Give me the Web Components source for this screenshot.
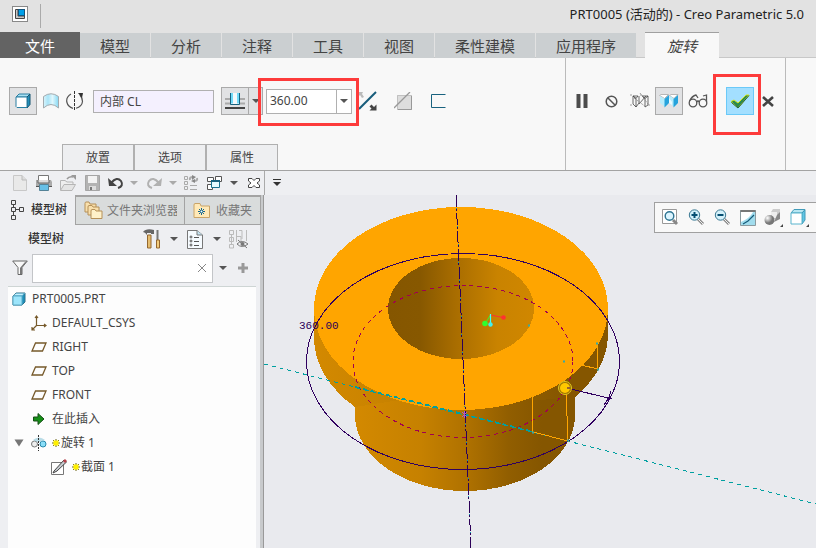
<!DOCTYPE html>
<html lang="zh-CN">
<head>
<meta charset="utf-8">
<title>PRT0005 - Creo Parametric 5.0</title>
<style>
html, body { margin: 0; height: 100%; }
body { font: 12px/16px "Noto Sans", "Noto Sans CJK SC", sans-serif; color: #444; background: #e9eaee; overflow: hidden; }
</style>
</head>
<body>
<app-window></app-window>
<script>
const ICONS = {
  app: [16, 16, '<rect x=".5" y=".5" width="15" height="15" fill="#fff" stroke="#888"/><path d="M3.500 3.500V12.500H12.500V10H6V3.500Z" fill="#c8c8c8" stroke="#444"/><rect x="6.500" y="3.500" width="6" height="6" fill="#009fe8" stroke="#14547c"/>'],
  solid: [16, 16, '<path d="M1 4L4 1H15L12 4Z" fill="#a9e0f2" stroke="#2b7fa3"/><path d="M12 4L15 1V11.500L12 15Z" fill="#238fba" stroke="#15536e"/><path d="M1 4H12V14.500H2L1 13.500Z" fill="#fff" stroke="#2b7fa3"/>'],
  surface: [16, 16, '<defs><linearGradient id="s"><stop stop-color="#d8f4fc"/><stop offset=".3" stop-color="#a9e4f7"/><stop offset=".6" stop-color="#dff7fd"/><stop offset="1" stop-color="#86d8f3"/></linearGradient></defs><path d="M.5 3.500Q8-2 15.500 3.500V15Q8 8 .5 15Z" fill="url(#s)" stroke="#a3aaae"/>'],
  revolve: [18, 20, '<path d="M8.500 0v20" stroke="#333" stroke-dasharray="3 1"/><path d="M5 3Q0 6 .8 11Q2 16 7 17.300M10 17.300Q16 15.500 16.500 10.500Q16.500 7 14 4" fill="none" stroke="#555" stroke-width="1.200"/><path d="M12 2h5l-1 5z" fill="#333"/>'],
  sides: [22, 18, '<path d="M1 7H21M1 11.500H21" stroke="#aaa" stroke-width="2"/><path d="M7 1H15V12H7Z" fill="#f5f9fb"/><path d="M6.500 1V12.500H15.500V1" fill="none" stroke="#19627f"/><path d="M8 1V11.500M14 1V11.500" fill="none" stroke="#71daf8" stroke-width="2"/><path d="M1 16H21" stroke="#444" stroke-width="2"/>'],
  flip: [18, 20, '<path d="M0 18L17 1" stroke="#185d7b" stroke-width="2"/><path d="M0 1H4L3 3L5 6L3 7L1 4L0 5Z" fill="#bbb"/><path d="M17.500 19.500H10.500L12.500 17.500L10.500 15.500L12.500 13.500L15 16L17.500 13.500Z" fill="#444"/>'],
  thick: [18, 18, '<path d="M3.500 3.500H17.500V17.500H3.500Z" fill="#ddd" stroke="#999" stroke-dasharray="1 1"/><path d="M4 17.500H17.500V4" fill="none" stroke="#999"/><path d="M0 16L16 0" stroke="#999" stroke-width="1.300"/>'],
  sketch: [16, 16, '<path d="M15.500 1.500H1.500V14.500H15.500" fill="none" stroke="#19627f"/>'],
  pause: [12, 14, '<path d="M2.500 0V14M9.500 0V14" stroke="#4c4c4c" stroke-width="4"/>'],
  no: [13, 13, '<circle cx="6.500" cy="6.500" r="5.300" fill="none" stroke="#555" stroke-width="1.500"/><path d="M3 3L10 10" stroke="#555" stroke-width="1.500"/>'],
  wire: [20, 16, '<g fill="none" stroke="#444"><path d="M3 3H8L6 5.500ZM12 3H18L15 5.500ZM3 3L6 5.500V14L3 11ZM6 14L9 10V3M12 3L15 5.500V14M18 3V12L15 14M9 11L16 3" stroke-width=".8"/><path d="M0 2H3M0 12H3M10 2H12M18 12H20M4 5L16 14M10 0L18 11" stroke="#888" stroke-width=".8" stroke-dasharray="2 1"/></g>'],
  preview: [20, 14, '<path d="M.5 1.500L2 .5H9.500L5.500 4.500ZM10.500 1.500L12 .5H19L15 4.500Z" fill="#fff" stroke="#b7b7b7"/><path d="M1 2L6 5V13L1 9ZM10 4L12 2L15 5V13L10 9Z" fill="#b8ecfb"/><path d="M5.500 5L10 1V9L5.500 13.500ZM14.500 5L19 1V9L14.500 13.500Z" fill="#26a3dc"/><path d="M10 4L13 8V11L10 9Z" fill="#edfaff"/>'],
  glasses: [20, 14, '<g fill="none" stroke="#555" stroke-width="1.300"><circle cx="5" cy="9" r="3.800"/><circle cx="15" cy="9" r="3.800"/><path d="M8.500 8Q10 6 11.500 8M1.500 7Q4 2 8 1L10 4M18.500 8V1L15 2"/></g>'],
  check: [20, 15, '<path d="M1 7.500L4 6L8 9L16 1H19L8 14Z" fill="#2b8a4d" stroke="#d6e618"/><path d="M1.500 8.500L8 14L19 1.500" fill="none" stroke="#245f3e"/>'],
  cross: [12, 12, '<path d="M1 2L11 11M11 2L1 11" stroke="#444" stroke-width="2.600"/>'],
  newf: [14, 16, '<path d="M.5.500H9L13.500 5V15.500H.5Z" fill="#e9e9e9" stroke="#c8c8c8"/><path d="M9 .5V5H13.500" fill="#ddd" stroke="#bbb"/>'],
  print: [18, 16, '<path d="M3.500 6V.500H13.500V6" fill="#fff" stroke="#777"/><path d="M1 5H16L17 7V12H1Z" fill="#aaa"/><path d="M3 5V8H14V5" fill="#ddd" stroke="#666"/><path d="M1 11.500H17" stroke="#555"/><path d="M4.500 9.500H13.500V15.500H4.500Z" fill="#66bfe6" stroke="#548297"/>'],
  open: [16, 16, '<path d="M.5 15V5.500H5L7 7H13V10" fill="#eee" stroke="#b5b5b5"/><path d="M.5 15.500L4 9.500H15.500L12 15.500Z" fill="#e4e4e4" stroke="#b5b5b5"/><path d="M7 4Q9 1 13 2" stroke="#999" stroke-width="1.500" fill="none"/><path d="M11 0H16V5Z" fill="#999"/>'],
  save: [15, 16, '<path d="M.5.500H14.500V15.500H.5Z" fill="#b3b3b3" stroke="#a5a5a5"/><path d="M3 1H12V8H3Z" fill="#f3f3f3"/><path d="M4 11H11V15H4Z" fill="#ddd"/><path d="M5 12H7V15H5Z" fill="#777"/>'],
  undo: [16, 12, '<path d="M3 6Q9-1 13 4Q16 9 10 11" fill="none" stroke="#444" stroke-width="2"/><path d="M0 1L1 9H9Z" fill="#444"/>'],
  redo: [16, 12, '<path d="M13 6Q7-1 3 4Q0 9 6 11" fill="none" stroke="#b1b1b1" stroke-width="2"/><path d="M16 1L15 9H7Z" fill="#b1b1b1"/>'],
  regen: [16, 16, '<g fill="none" stroke="#aaa"><path d="M1.500 1.500H4.500V4.500H1.500ZM1.500 6.500H4.500V9.500H1.500ZM1.500 11.500H4.500V14.500H1.500ZM7 10.500H14M7 14.500H14" /><path d="M7 5Q6 2 10 2M14 3Q15 6 11 6" stroke-width="2"/></g><path d="M9 0L13 2L9 5ZM12 4L8 6L12 8Z" fill="#888"/>'],
  windows: [16, 15, '<path d="M.5 1.500H6.500V5.500H.5ZM8.500.500H14.500V5.500H8.500ZM.5 8.500H5.500V13.500H.5Z" fill="#fff" stroke="#555"/><path d="M4.500 4.500H12.500V11.500H4.500Z" fill="#e6faff" stroke="#19708f"/><path d="M4 5H13" stroke="#19627f" stroke-width="2"/>'],
  closewin: [12, 10, '<path d="M.5.500H4L6 2.500L8 .5H11.500V3L9 5L11.500 7V9.500H8L6 7.500L4 9.500H.5V7L3 5L.5 3Z" fill="#fff" stroke="#444"/>'],
  caret: [8, 4, '<path d="M0 0H8L4 4Z" fill="#555"/>'],
  caretoff: [8, 4, '<path d="M0 0H8L4 4Z" fill="#aaa"/>'],
  more: [10, 8, '<path d="M1 .5H9" stroke="#333"/><path d="M1 3H9L5 7Z" fill="#333"/>'],
  tree: [14, 20, '<path d="M1.500.500H5.500V4.500H1.500ZM1.500 7.500H5.500V11.500H1.500ZM1.500 15.500H5.500V19.500H1.500ZM9.500 7.500H13.500V11.500H9.500ZM3.500 5V7M3.500 12V15M6 9.500H9" fill="none" stroke="#444"/>'],
  folders: [19, 19, '<g fill="#f8dfab" stroke="#b59059"><path d="M1 11V2.500Q1 1 2 1H5L6 3H12V11Z"/><path d="M4 14V6Q4 4.500 5 4.500H8L9 6H15V14Z"/><path d="M7 17.500V10Q7 8.500 8 8.500H11L12 10H18V17.500Z" fill="#fff1c9"/></g>'],
  fav: [17, 15, '<path d="M1 14.500V2Q1 .5 2 .5H7L8 3H16.500V14.500Z" fill="#ffe9b7" stroke="#c9a468"/><path d="M8.500 5V12M5 8.500H12M6 6L11 11M11 6L6 11" stroke="#14678b"/><circle cx="8.500" cy="8.500" r="1" fill="#fff"/>'],
  tools: [18, 20, '<path d="M0 3Q3-1 11 1V5H8V4H4V6Q2 3 0 3Z" fill="#666"/><path d="M4.500 6H8V19H4.500Z" fill="#e5bd70" stroke="#94672e"/><path d="M14.500 1V12" stroke="#777" stroke-width="2"/><path d="M13.500 11H16.500V19H13.500Z" fill="#f3cc7d" stroke="#94672e"/>'],
  list: [16, 19, '<path d="M.5.500H10L15.500 5V18.500H.5Z" fill="#f6fbff" stroke="#777"/><path d="M10 .5V5H15.500" fill="#c6e6f4" stroke="#777"/><g fill="none" stroke="#555"><circle cx="4" cy="7" r="1"/><circle cx="4" cy="11" r="1"/><circle cx="4" cy="15" r="1"/><path d="M7 7.500H12M7 11.500H12M7 15.500H12"/></g>'],
  hide: [20, 20, '<path d="M1.500 1.500H5.500V5.500H1.500ZM1.500 8.500H5.500V12.500H1.500ZM1.500 15.500H5.500V19H1.500ZM3.500 6V15M8.500 1V13M11 1.500H14V10M18.500 1V12M8 7.500H13V12" fill="none" stroke="#bbb"/><path d="M9 15Q14 10 20 15Q14 20 9 15ZM10 11L19 19" fill="none" stroke="#777"/><circle cx="14.500" cy="15" r="2" fill="#777"/>'],
  funnel: [16, 16, '<path d="M.7 1H15.300L10 7.500V14.500H6V7.500Z" fill="#f8f8f8" stroke="#666"/><path d="M13 2L8 8V14H10V7.500L15 1Z" fill="#777"/>'],
  clear: [8, 8, '<path d="M0 0L8 8M8 0L0 8" stroke="#888"/>'],
  plus: [12, 12, '<path d="M6 1V11M1 6H11" stroke="#999" stroke-width="3"/>'],
  part: [14, 14, '<path d="M1 4L4 1H13V10L10 13H1Z" fill="#1c91bc" stroke="#31718a"/><path d="M1 4H10V13H1Z" fill="#9de5fb"/><path d="M1.500 3.500L4 1.500H12L10 3.500Z" fill="#c4f1ff"/><path d="M1 4H10V13H1ZM10 4L13 1" fill="none" stroke="#5aa9c5"/>'],
  csys: [16, 16, '<path d="M5.500 1V10.500H15M5.500 10.500L1 15M4 3L5.500 1L7 3M13 9L15 10.500L13 12M1 12V15H4" fill="none" stroke="#76592a" stroke-width="1.200"/>'],
  plane: [16, 10, '<path d="M4.500 1H15L11.500 9H1Z" fill="none" stroke="#76592a" stroke-width="1.300"/>'],
  insert: [12, 12, '<path d="M.5 4H5V.5L11 6L5 11.500V8H.5Z" fill="#169018" stroke="#164f16"/>'],
  feature: [16, 16, '<circle cx="3.500" cy="9" r="3" fill="#eee" stroke="#777"/><circle cx="12" cy="9" r="3" fill="#8adef8" stroke="#2789ac"/><path d="M2 5Q8 0 14 5Q8 9 2 5Z" fill="#9bcddd" opacity=".7"/><path d="M7.500 0V16" stroke="#333" stroke-dasharray="2 1"/>'],
  section: [16, 16, '<path d="M.5 3.500H12.500V15.500H.5Z" fill="#fff" stroke="#777"/><path d="M3 12L13 1L15.500 3L6 12L2 14Z" fill="#c6cbd0" stroke="#444"/><path d="M12 2L14 0L16 2L14 4Z" fill="#b7414b"/>'],
  spark: [8, 8, '<path d="M4 0V8M0 4H8M1 1L7 7M7 1L1 7" stroke="#6a6215"/><path d="M1.500 1.500H6.500V6.500H1.500Z" fill="#fff000"/>'],
  fold: [10, 8, '<path d="M.5.500H9.500L5 7.500Z" fill="#777"/>'],
  fit: [17, 17, '<path d="M.5.500H14.500V14.500H.5Z" fill="#fff" stroke="#999"/><path d="M11 11L15 15" stroke="#888" stroke-width="3"/><circle cx="7.500" cy="7" r="4.300" fill="#dcf5ff" stroke="#2e7492" stroke-width="1.400"/>'],
  zin: [17, 17, '<path d="M10 10L15 15" stroke="#888" stroke-width="3"/><path d="M10 10L15 15" stroke="#eee"/><circle cx="6.500" cy="6" r="5.200" fill="#d4f1fa" stroke="#3c7993"/><path d="M3.500 6H9.500M6.500 3V9" stroke="#064f72" stroke-width="2"/>'],
  zout: [17, 17, '<path d="M10 10L15 15" stroke="#888" stroke-width="3"/><path d="M10 10L15 15" stroke="#eee"/><circle cx="6.500" cy="6" r="5.200" fill="#d4f1fa" stroke="#3c7993"/><path d="M3.500 6H9.500" stroke="#064f72" stroke-width="2"/>'],
  repaint: [16, 16, '<path d="M.5.500H15.500V15.500H.5Z" fill="#a1dced" stroke="#8a999e"/><path d="M1 2H13Q10 8 1 12Z" fill="#fff"/><path d="M.5 1H15.500" stroke="#777" stroke-width="2"/><path d="M14 5L8 11L3 14" fill="none" stroke="#155b7a" stroke-width="1.200"/>'],
  shade: [20, 18, '<defs><radialGradient id="b" cx=".3" cy=".3"><stop stop-color="#fff"/><stop offset="1" stop-color="#777"/></radialGradient></defs><path d="M7 3L9 0H16V8L13 10H7Z" fill="#ccc"/><path d="M7 3H13V9H7Z" fill="#eee"/><path d="M10 13L16 10V3L13 6Z" fill="#888"/><circle cx="5.500" cy="11" r="5" fill="url(#b)"/><path d="M16 18H19V15Z" fill="#444"/>'],
  view: [20, 18, '<path d="M1 4L4 .5H15L12 4Z" fill="#b7e6f2" stroke="#419bb9"/><path d="M12 4L15 1V11L12 15Z" fill="#60c6e5" stroke="#419bb9"/><path d="M1 4H12V15H1Z" fill="#fff" stroke="#59b4cd"/><path d="M16 18H19V15Z" fill="#444"/>']
};
function define(name, css, html) {
  const t = document.createElement('template');
  t.innerHTML = '<style>*{box-sizing:border-box}button,input{font:inherit;color:inherit}button{cursor:default}' + css + '</style>' + html;
  customElements.define(name, class extends HTMLElement {
    constructor() {
      super();
      this.attachShadow({ mode: 'open' }).append(t.content.cloneNode(true));
    }
  });
}
const ic = n => `<ui-icon name="${n}"></ui-icon>`;
const ib = (n, label, cls = '') => `<icon-button class="${cls}" label="${label}" name="${n}"></icon-button>`;

customElements.define('ui-icon', class extends HTMLElement {
  connectedCallback() {
    if (this.shadowRoot) return;
    const [w, h, body] = ICONS[this.getAttribute('name')];
    this.attachShadow({ mode: 'open' }).innerHTML =
      `<style>:host{display:inline-flex;flex:none}svg{display:block}</style><svg width="${w}" height="${h}" viewBox="0 0 ${w} ${h}" aria-hidden="true">${body}</svg>`;
  }
});
customElements.define('icon-button', class extends HTMLElement {
  connectedCallback() {
    if (this.shadowRoot) return;
    this.attachShadow({ mode: 'open' }).innerHTML =
      `<style>:host{display:flex;flex:none;min-width:0}button{all:unset;box-sizing:border-box;flex:1;display:flex;align-items:center;justify-content:center;
       background:var(--bg,none);border:1px solid var(--edge,transparent)}</style>
       <button type="button" aria-label="${this.getAttribute('label')}">${ic(this.getAttribute('name'))}</button>`;
  }
});
define('mark-box', `:host{display:flex;position:relative}:host::after{content:"";position:absolute;inset:var(--inset);border:3px solid #fd3b3b;pointer-events:none;z-index:2}`, '<slot></slot>');

define('title-bar', `:host{display:flex;align-items:center;height:32px;padding:0 12px;background:#e2e2e2;color:#222;font-size:13px}
  .sep{width:1px;height:24px;background:#aaa;margin-left:12px}h1{margin:0 0 0 auto;padding-bottom:4px;font:inherit;white-space:nowrap}ui-icon{padding-bottom:4px}`,
  `${ic('app')}<span class="sep"></span><h1>PRT0005 (活动的) - Creo Parametric 5.0</h1>`);

define('ribbon-tabs', `:host{display:block;background:#e2e2e2}nav{display:flex;gap:1px;height:26px;font-size:15px;line-height:22px;background:linear-gradient(#c8c8c8,#c8c8c8) 0 100%/100% 1px no-repeat}
  button{all:unset;box-sizing:border-box;width:70px;text-align:center;background:#cbcfd1;white-space:nowrap;height:26px;border-top:1px solid #e2e2e2}
  button.w{width:100px}.file{width:80px;margin-right:-1px;background:#636363;color:#fff;border-top-color:#636363}
  .on{width:74px;margin-left:8px;background:#f8f8f8;border-top-color:#a0a0a0;font-style:italic}`,
  `<nav><button class="file">文件</button><button>模型</button><button>分析</button><button>注释</button><button>工具</button><button>视图</button><button class="w">柔性建模</button><button class="w">应用程序</button><button class="on">旋转</button></nav>`);

define('ribbon-panel', `:host{display:flex;height:113px;background:#f8f8f8;border-bottom:1px solid #a3a3a3}
  .main{flex:1;display:flex;flex-direction:column;justify-content:space-between;padding-top:29px;min-width:0}
  .row{display:flex;align-items:center;height:28px}
  .main .row{padding-left:9px}
  icon-button{height:28px;width:28px}.c24{width:24px}.c32{width:32px;margin-right:3px}
  .pressed{--bg:#e1e2e4;--edge:#aaa}
  .main .first{margin-right:2px}
  .axis{width:121px;height:23px;margin:0 7px 0 6px;padding:0 6px;border:1px solid #b0b0b0;background:#f4f0fe;outline:0;flex:none}
  .arrow{width:15px;margin:0 3px 0 -1px}
  .combo{display:flex;width:86px;height:25px;border:1px solid #b0b0b0;background:#fff}
  .combo input{width:69px;min-width:0;border:0;padding:0 0 0 3px;background:none;outline:0}
  .combo icon-button{width:15px;height:23px;border-left:1px solid #b0b0b0}
  .angle{--inset:-11px -7px -12px -8px}
  nav{display:flex;margin-left:62px;height:26px}
  nav button{all:unset;box-sizing:border-box;width:72px;text-align:center;background:#eeeff1;border:1px solid #b0b0b0;border-bottom:0}
  .act{width:221px;border:solid #bbb;border-width:0 1px;padding-top:29px}
  .act .row{gap:1px;padding-left:2px}
  .ok{--inset:-13px -7px -20px -13px;margin-left:13px;margin-right:-1px}.ok icon-button{--bg:#a3dfff;--edge:#6bc9f8}
  .tail{width:30px}`,
  `<div class="main"><div class="row">${ib('solid','实体','pressed first')}${ib('surface','曲面','c24')}${ib('revolve','旋转轴','c24')}
   <input class="axis" aria-label="旋转轴" value="内部 CL">${ib('sides','单侧','pressed')}${ib('caret','侧选项','pressed arrow')}
   <mark-box class="angle"><div class="combo"><input aria-label="角度" value="360.00">${ib('caret','角度列表')}</div></mark-box>
   ${ib('flip','反向','c32')}${ib('thick','移除材料','c32')}${ib('sketch','加厚草绘','c32')}</div>
   <nav><button>放置</button><button>选项</button><button>属性</button></nav></div>
   <div class="act"><div class="row">${ib('pause','暂停')}${ib('no','无预览')}${ib('wire','分离')}${ib('preview','连接','pressed')}${ib('glasses','验证')}
   <mark-box class="ok">${ib('check','确定')}</mark-box>${ib('cross','取消')}</div></div><div class="tail"></div>`);

define('quick-bar', `:host{display:grid;align-items:center;height:24px;padding-left:8px;background:#eeeff2;
  grid-template-columns:repeat(5,24px) 12px 28px 8px 30px 18px 20px 20px 1px 24px}icon-button{height:22px}i{height:24px;background:#aaa}`,
  ib('newf','新建')+ib('print','打印')+ib('open','打开')+ib('save','保存')+ib('undo','撤消')+ib('caretoff','撤消列表')+ib('redo','重做')+ib('caretoff','重做列表')+ib('regen','重新生成')+ib('windows','窗口')+ib('caret','窗口列表')+ib('closewin','关闭')+'<i></i>'+ib('more','自定义'));

define('tree-panel', `:host{display:flex;flex-direction:column;width:264px;flex:none;background:linear-gradient(90deg,#eeeff2 260px,#c8cacc 260px,#c8cacc 263px,#999 263px)}
  .tabs{display:flex;height:30px;padding-right:3px}
  .tabs button{all:unset;box-sizing:border-box;display:flex;align-items:center;gap:4px;overflow:hidden;white-space:nowrap;background:#d9dcdc;color:#777;border:1px solid #a3a3a3;border-top:2px solid #a3a3a3;border-right:0;padding:0 7px 0 8px}
  .tabs button:first-child{width:75px;background:none;border:0;color:#333;font-weight:500;padding:0 0 0 10px;gap:7px}
  .tabs button:nth-child(2){width:109px}.tabs button:nth-child(3){width:77px;border-right:1px solid #a3a3a3;gap:6px}
  .tabs span{overflow:hidden}
  .head{display:flex;align-items:center;height:28px;padding-left:28px}
  h2{font:inherit;font-weight:500;margin:0 76px 0 0;color:#333}
  .head icon-button{width:24px}.head .a{width:19px}
  .filter{display:flex;align-items:center;height:30px;padding-left:12px;gap:4px}
  .box{display:flex;align-items:center;width:181px;height:29px;background:#fff;border:1px solid #c3c5c8}
  .box input{flex:1;min-width:0;border:0;outline:0;background:none}.box icon-button{width:20px}
  .filter .a{width:12px}.filter .p{width:20px}
  .tree{flex:1;margin:3px 8px 0 8px;background:#fdfdfd;border-top:1px solid #ced5d4}`,
  `<div class="tabs"><button>${ic('tree')}<span>模型树</span></button><button>${ic('folders')}<span>文件夹浏览器</span></button><button>${ic('fav')}<span>收藏夹</span></button></div>
   <div class="head"><h2>模型树</h2>${ib('tools','设置')}${ib('caret','设置列表','a')}${ib('list','显示')}${ib('caret','显示列表','a')}${ib('hide','隐藏')}</div>
   <div class="filter">${ic('funnel')}<div class="box"><input aria-label="过滤">${ib('clear','清除')}</div>${ib('caret','过滤列表','a')}${ib('plus','添加','p')}</div>
   <div class="tree"><slot></slot></div>`);

customElements.define('tree-node', class extends HTMLElement {
  connectedCallback() {
    if (this.shadowRoot) return;
    const level = Number(this.getAttribute('level'));
    this.attachShadow({ mode: 'open' }).innerHTML = `<style>:host{display:flex;align-items:center;height:24px;white-space:nowrap}
      .f{width:20px;display:flex;justify-content:center}.g{width:${level * 20}px;display:flex;padding-left:${level === 1 ? 2 : 0}px;box-sizing:border-box}
      .i{width:17px;display:flex;justify-content:center;margin:0 5px 0 2px}.s{align-self:flex-start;margin:4px 1px 0 0}</style>
      <span class="g">${this.hasAttribute('fold') ? '<span class="f">' + ic('fold') + '</span>' : ''}</span>
      <span class="i">${ic(this.getAttribute('icon'))}</span>${this.hasAttribute('spark') ? '<span class="s">' + ic('spark') + '</span>' : ''}<span><slot></slot></span>`;
  }
});

define('view-toolbar', `:host{display:flex;align-items:center;height:31px;padding:0 3px 0 2px;background:#f8f8f8;border:1px solid #a0a0a0;border-right:0}icon-button{width:26px;height:28px}`,
  ib('fit','重新调整')+ib('zin','放大')+ib('zout','缩小')+ib('repaint','重画')+ib('shade','显示样式')+ib('view','已保存方向'));

define('model-view', `:host{display:block;position:relative;flex:1;min-width:0;overflow:hidden;background:#e9eaee}svg{display:block;width:100%;height:100%}
  view-toolbar{position:absolute;top:7px;right:0}text{font:11px "Liberation Mono",monospace;fill:#2c0058}`,
  `<svg aria-label="旋转特征"><defs>
   <linearGradient id="body"><stop stop-color="#d38900"/><stop offset=".3" stop-color="#c68100"/><stop offset=".5" stop-color="#b07200"/><stop offset=".7" stop-color="#915e00"/><stop offset=".85" stop-color="#855600"/><stop offset="1" stop-color="#855600"/></linearGradient>
   <linearGradient id="hole"><stop stop-color="#855600"/><stop offset=".22" stop-color="#875800"/><stop offset=".45" stop-color="#a76c00"/><stop offset=".75" stop-color="#c98300"/><stop offset="1" stop-color="#d08700"/></linearGradient></defs>
   <g transform="translate(-264 -195)" fill="none">
   <g shape-rendering="crispEdges"><path d="M355 380V415A110 76 0 0 0 575 415V380Z" fill="url(#body)"/>
   <path d="M314 308V336A147 101 0 0 0 355 407L400 400H540L575 397A147 101 0 0 0 608 336V303Z" fill="url(#body)"/>
   <ellipse cx="461" cy="308.500" rx="147" ry="101.500" fill="#ffa500"/><ellipse cx="461" cy="308.500" rx="73" ry="50.500" fill="url(#hole)"/>
   <ellipse cx="463" cy="361.500" rx="156.500" ry="108" stroke="#300060"/>
   <ellipse cx="463" cy="361.500" rx="110" ry="76" stroke="#a00050" stroke-dasharray="4 4"/>
   <path d="M264 364L816 504" stroke="#00a0a0" stroke-dasharray="4 4"/><path d="M355 387L534 432" stroke="#00a0a0" stroke-width="2" stroke-dasharray="4 4"/>
   <path d="M456 195L471 548" stroke="#2c0058" stroke-dasharray="12 2 2 2"/><path d="M456 195L471 548" stroke="#00a0b0" stroke-dasharray="1 17" stroke-dashoffset="5"/>
   <path d="M532 395L533 432L568 441L566 390M597 343L598 369L581 365" stroke="#ffa500"/>
   <path d="M567 388L612 399M611 391L609 397L604 405M612 395L605 403" stroke="#300060"/></g>
   <circle cx="565" cy="388" r="6.500" fill="#9d7100" stroke="#e0c820"/><circle cx="565" cy="388" r="5" fill="#ffc800"/><path d="M567 388H570" stroke="#300060"/>
   <path d="M490.500 315L503 317.500" stroke="#ff3131"/><path d="M490.500 315L485 324" stroke="#2eff2e"/><path d="M490.500 314V325" stroke="#4ff" stroke-width="1.200"/>
   <circle cx="503.500" cy="317.500" r="2.300" fill="#ff3131"/><circle cx="485" cy="323.500" r="2.800" fill="#2eff2e"/><circle cx="490.500" cy="324.500" r="2.200" fill="#4ee"/>
   <path d="M528 325.500H530M563 361.500H565M596 343.500H598M597 369.500H599M532 432.500H534M567 440.500H569" stroke="#33aaaa" stroke-width="2"/>
   <path d="M462 412L467 417M467 412L462 417M464.500 411V418" stroke="#a55ed0"/>
   <text x="299" y="329">360.00</text></g></svg><view-toolbar></view-toolbar>`);

define('app-window', `:host{display:flex;flex-direction:column;height:100vh}.work{display:flex;flex:1;min-height:0}`,
  `<title-bar></title-bar><ribbon-tabs></ribbon-tabs><ribbon-panel></ribbon-panel><quick-bar></quick-bar>
   <div class="work"><tree-panel><tree-node level="0" icon="part">PRT0005.PRT</tree-node><tree-node level="1" icon="csys">DEFAULT_CSYS</tree-node>
   <tree-node level="1" icon="plane">RIGHT</tree-node><tree-node level="1" icon="plane">TOP</tree-node><tree-node level="1" icon="plane">FRONT</tree-node>
   <tree-node level="1" icon="insert">在此插入</tree-node><tree-node level="1" icon="feature" fold spark>旋转 1</tree-node><tree-node level="2" icon="section" spark>截面 1</tree-node></tree-panel>
   <model-view></model-view></div>`);
</script>
</body>
</html>
